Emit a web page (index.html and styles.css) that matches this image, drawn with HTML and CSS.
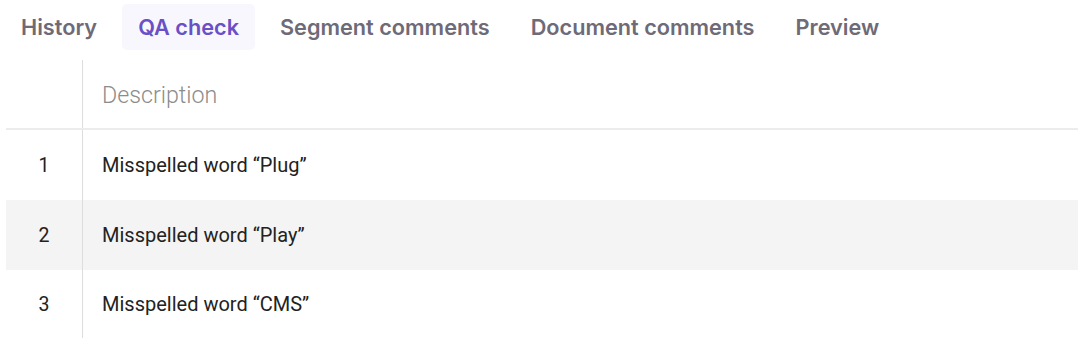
FILE: index.html
```html
<!DOCTYPE html>
<html lang="en">
<head>
<meta charset="utf-8">
<link rel="stylesheet" href="styles.css">
</head>
<body>
<nav class="tabs">
  <div class="tab">History</div>
  <div class="tab active">QA check</div>
  <div class="tab">Segment comments</div>
  <div class="tab">Document comments</div>
  <div class="tab">Preview</div>
</nav>
<div class="table">
  <div class="row head">
    <div class="num"></div>
    <div class="desc">Description</div>
  </div>
  <div class="row">
    <div class="num">1</div>
    <div class="desc">Misspelled word “Plug”</div>
  </div>
  <div class="row alt">
    <div class="num">2</div>
    <div class="desc">Misspelled word “Play”</div>
  </div>
  <div class="row last">
    <div class="num">3</div>
    <div class="desc">Misspelled word “CMS”</div>
  </div>
</div>
</body>
</html>
```

FILE: styles.css
```css
html, body {
  margin: 0;
  padding: 0;
  background: #ffffff;
}
body {
  width: 1078px;
  height: 356px;
  overflow: hidden;
}
.tabs {
  display: flex;
  gap: 9px;
  padding: 4px 0 0 5px;
  height: 46px;
}
.tab {
  display: flex;
  align-items: center;
  padding: 0 16px;
  height: 46px;
  border-radius: 5px;
  font-family: Inter, "Liberation Sans", sans-serif;
  font-weight: 600;
  font-size: 21.7px;
  color: #6e6a77;
}
.tab.active {
  background: #f8f7fd;
  color: #6a50c6;
}
.table {
  margin: 10px 0 0 6px;
  font-family: Roboto, "Liberation Sans", sans-serif;
}
.row {
  display: flex;
  height: 70px;
  align-items: stretch;
}
.row.head {
  height: 68px;
  border-bottom: 2px solid #ececec;
}
.row.alt {
  background: #f4f4f4;
}
.row.last {
  height: 68px;
}
.num {
  width: 76px;
  border-right: 1px solid #dddddd;
  display: flex;
  align-items: center;
  justify-content: center;
  font-size: 19.5px;
  color: #222222;
}
.desc {
  display: flex;
  align-items: center;
  padding-left: 19px;
  font-size: 20px;
  color: #222222;
}
.head .desc {
  font-size: 23.2px;
  font-weight: 300;
  color: #8c8c8c;
  padding-top: 2px;
}
```
